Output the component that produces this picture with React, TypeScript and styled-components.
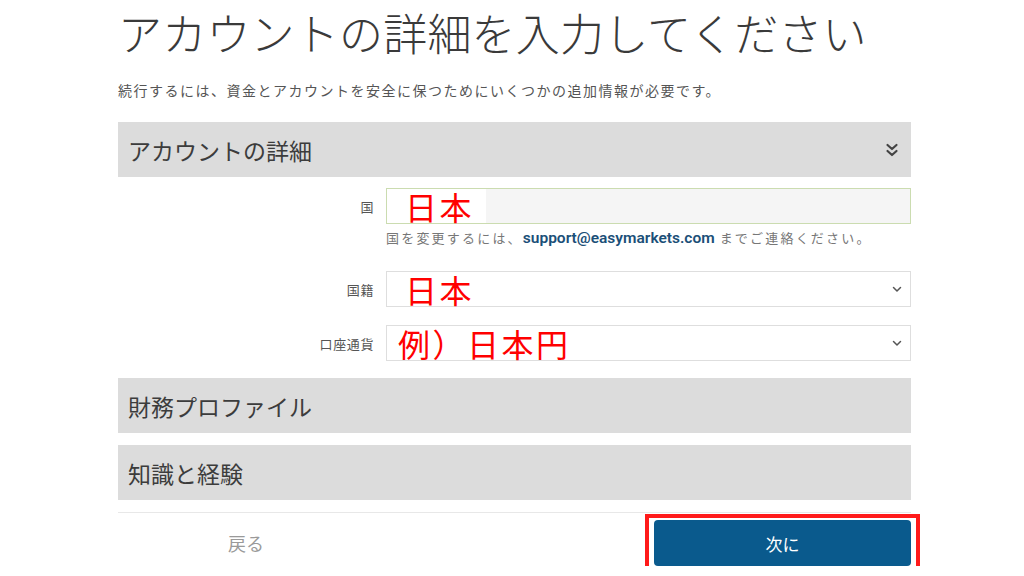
import React from 'react';
import styled, { createGlobalStyle } from 'styled-components';

const GlobalStyle = createGlobalStyle`
  html, body {
    margin: 0;
    padding: 0;
    background: #fff;
  }
  body {
    font-family: "Noto Sans CJK JP", "Noto Sans", "Liberation Sans", sans-serif;
    color: #333;
  }
`;

const Page = styled.div`
  width: 793px;
  margin: 0 0 0 118px;
  padding-top: 2px;
`;

const Title = styled.h1`
  font-size: 44px;
  font-weight: 300;
  color: #3a3a3a;
  margin: 0;
  line-height: 60px;
  letter-spacing: 0.2px;
`;

const Lead = styled.p`
  font-size: 14px;
  letter-spacing: 1.5px;
  color: #555;
  margin: 18px 0 22px;
  line-height: 20px;
`;

const SectionHead = styled.div`
  display: flex;
  align-items: center;
  justify-content: space-between;
  height: 55px;
  padding: 0 12px 0 10px;
  background: #dcdcdc;
  font-size: 23px;
  color: #3c3c3c;
  margin-bottom: 12px;
`;

const Fields = styled.div`
  display: flex;
  flex-direction: column;
  gap: 18px;
  margin-top: -1px;
  padding: 0 0 17px;
`;

const Row = styled.div`
  display: grid;
  grid-template-columns: 256px 1fr;
  column-gap: 12px;
  align-items: center;
`;

const Label = styled.label`
  text-align: right;
  font-size: 13px;
  letter-spacing: 0.6px;
  color: #555;
`;

const Box = styled.div<{ $locked?: boolean }>`
  display: flex;
  align-items: center;
  height: 36px;
  box-sizing: border-box;
  border: 1px solid ${p => (p.$locked ? '#cbdcb0' : '#dedede')};
  background: ${p => (p.$locked ? '#f5f5f5' : '#fff')};
  padding-right: 8px;
`;

const Value = styled.span<{ $tight?: boolean }>`
  align-self: stretch;
  display: flex;
  align-items: center;
  background: #fff;
  color: #ff0000;
  font-size: 32px;
  line-height: 34px;
  letter-spacing: 2.5px;
  padding: 0 12px 0 ${p => (p.$tight ? 11 : 18)}px;
`;

const Caret = styled.svg`
  margin-left: auto;
  flex: none;
`;

const Help = styled.div`
  grid-column: 2;
  font-size: 13px;
  letter-spacing: 2.2px;
  color: #777;
  margin: 5px 0 6px;
  line-height: 18px;
`;

const Mail = styled.a`
  color: #1b4f78;
  font-weight: 600;
  font-size: 15.5px;
  letter-spacing: 0;
  font-family: "Roboto", "Liberation Sans", sans-serif;
  text-decoration: none;
  margin-right: 5px;
`;

const Footer = styled.div`
  display: flex;
  justify-content: space-between;
  align-items: center;
  border-top: 1px solid #e8e8e8;
  padding-top: 7px;
`;

const BackButton = styled.button`
  width: 256px;
  height: 46px;
  border: none;
  background: transparent;
  font-family: inherit;
  font-size: 18px;
  color: #9a9a9a;
  cursor: pointer;
`;

const Highlight = styled.div`
  position: relative;

  &::after {
    content: '';
    position: absolute;
    inset: -6px -9px -6px -9px;
    border: 4px solid #ff1a1a;
    pointer-events: none;
  }
`;

const NextButton = styled.button`
  display: block;
  width: 257px;
  height: 46px;
  border: none;
  border-radius: 4px;
  background: #0a5a8d;
  color: #fff;
  font-family: inherit;
  font-size: 17px;
  cursor: pointer;
`;

const DoubleChevron = () => (
  <svg width="14" height="16" viewBox="0 0 14 16" fill="none" stroke="#444" strokeWidth="2.2" strokeLinecap="round" strokeLinejoin="round">
    <path d="M2.5 3l4.5 4 4.5-4" />
    <path d="M2.5 9l4.5 4 4.5-4" />
  </svg>
);

const SmallCaret = () => (
  <Caret width="10" height="7" viewBox="0 0 10 7" fill="none" stroke="#555" strokeWidth="1.5" strokeLinecap="round" strokeLinejoin="round">
    <path d="M1.5 1.5L5 5l3.5-3.5" />
  </Caret>
);

export default function App() {
  return (
    <Page>
      <GlobalStyle />
      <Title>アカウントの詳細を入力してください</Title>
      <Lead>続行するには、資金とアカウントを安全に保つためにいくつかの追加情報が必要です。</Lead>

      <SectionHead>
        <span>アカウントの詳細</span>
        <DoubleChevron />
      </SectionHead>

      <Fields>
        <Row>
          <Label>国</Label>
          <Box $locked>
            <Value>日本</Value>
          </Box>
          <Help>
            国を変更するには、<Mail href="#">support@easymarkets.com</Mail>までご連絡ください。
          </Help>
        </Row>
        <Row>
          <Label>国籍</Label>
          <Box>
            <Value>日本</Value>
            <SmallCaret />
          </Box>
        </Row>
        <Row>
          <Label>口座通貨</Label>
          <Box>
            <Value $tight>例）日本円</Value>
            <SmallCaret />
          </Box>
        </Row>
      </Fields>

      <SectionHead>
        <span>財務プロファイル</span>
      </SectionHead>
      <SectionHead>
        <span>知識と経験</span>
      </SectionHead>

      <Footer>
        <BackButton>戻る</BackButton>
        <Highlight>
          <NextButton>次に</NextButton>
        </Highlight>
      </Footer>
    </Page>
  );
}
